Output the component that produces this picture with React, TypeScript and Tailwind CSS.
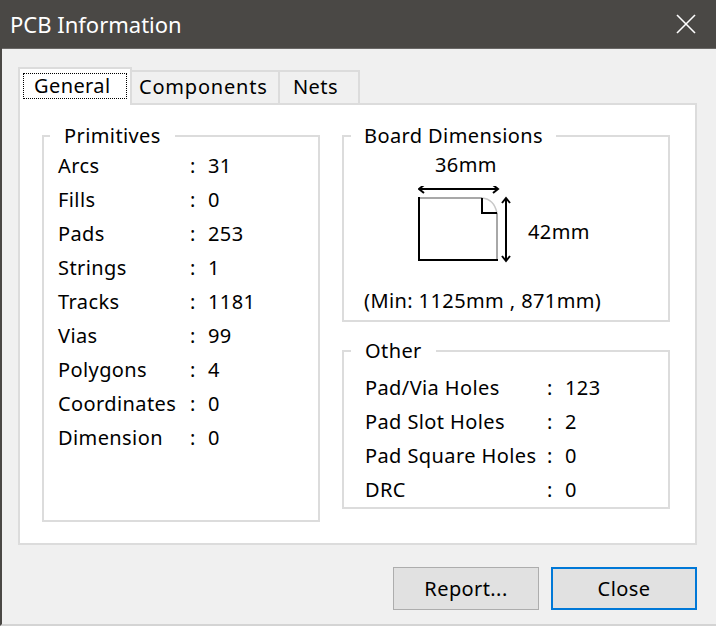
import React from 'react';

const primitives = [
  ['Arcs', '31'],
  ['Fills', '0'],
  ['Pads', '253'],
  ['Strings', '1'],
  ['Tracks', '1181'],
  ['Vias', '99'],
  ['Polygons', '4'],
  ['Coordinates', '0'],
  ['Dimension', '0'],
];

const other = [
  ['Pad/Via Holes', '123'],
  ['Pad Slot Holes', '2'],
  ['Pad Square Holes', '0'],
  ['DRC', '0'],
];

const font = { fontFamily: '"Noto Sans", "Open Sans", sans-serif' };

const App = () => {
  return (
    <div
      className="w-[716px] h-[626px] bg-[#f0f0f0] border-l-2 border-b-2 border-l-[#4a4845] border-b-[#d4d4d4] flex flex-col text-black text-[20px] tracking-[0.02em] overflow-hidden"
      style={font}
    >
      {/* Title bar */}
      <div className="h-[49px] shrink-0 bg-[#4a4845] flex items-center justify-between pl-[8px] pr-[20px] border-b border-[#6a6866]">
        <span className="text-white text-[22px] leading-none tracking-normal">PCB Information</span>
        <svg width="20" height="20" viewBox="0 0 20 20">
          <line x1="1" y1="1" x2="19" y2="19" stroke="#fff" strokeWidth="1.6" />
          <line x1="19" y1="1" x2="1" y2="19" stroke="#fff" strokeWidth="1.6" />
        </svg>
      </div>

      <div className="flex-1 flex flex-col pl-[16px] pr-[19px] pt-[17px]">
        {/* Tabs */}
        <div className="flex items-end h-[37px]">
          <div className="relative z-10 h-[38px] mb-[-2px] bg-white border-2 border-b-0 border-[#dcdcdc] px-[3px] pt-[4px] w-[114px]">
            <div className="border border-dotted border-black h-[26px] flex items-center px-[10px] leading-none">
              General
            </div>
          </div>
          <div className="h-[33px] border-2 border-b-0 border-l-0 border-[#dcdcdc] bg-[#f0f0f0] w-[148px] flex items-center pl-[7px] leading-none pb-[2px] tracking-[0.04em]">
            Components
          </div>
          <div className="h-[33px] border-2 border-b-0 border-l-0 border-[#dcdcdc] bg-[#f0f0f0] w-[80px] flex items-center pl-[13px] leading-none pb-[2px]">
            Nets
          </div>
        </div>

        {/* Tab panel */}
        <div className="h-[442px] bg-white border-2 border-[#dcdcdc] flex gap-[22px] pl-[22px] pr-[24px] pt-[18px]">
          <fieldset className="w-[278px] h-[399px] border-2 border-[#dcdcdc] pl-[14px] pr-0 pb-0 pt-0 m-0">
            <legend className="ml-[-8px] px-[14px] leading-[26px]">Primitives</legend>
            <div className="grid grid-cols-[132px_18px_auto]">
              {primitives.map(([k, v]) => (
                <React.Fragment key={k}>
                  <div className="h-[34px] flex items-center whitespace-nowrap">{k}</div>
                  <div className="h-[34px] flex items-center">:</div>
                  <div className="h-[34px] flex items-center">{v}</div>
                </React.Fragment>
              ))}
            </div>
          </fieldset>

          <div className="flex flex-col gap-[16px] w-[328px]">
            <fieldset className="h-[199px] border-2 border-[#dcdcdc] pl-[20px] p-0 m-0">
              <legend className="ml-[-13px] px-[13px] leading-[26px]">Board Dimensions</legend>
              <div className="relative h-[170px]">
                <span className="absolute left-[71px] top-[6px] leading-none">36mm</span>
                <svg className="absolute left-[54px] top-[37px]" width="100" height="80" viewBox="0 0 100 80">
                  {/* width arrow */}
                  <line x1="1" y1="3" x2="80" y2="3" stroke="#000" strokeWidth="2" />
                  <polyline points="6,-1 1,3 6,7" fill="none" stroke="#000" strokeWidth="2" />
                  <polyline points="75,-1 80,3 75,7" fill="none" stroke="#000" strokeWidth="2" />
                  {/* board */}
                  <line x1="1" y1="12" x2="64" y2="12" stroke="#a8a8a8" strokeWidth="2" />
                  <path d="M64 12 Q76 13 79 27" fill="none" stroke="#c8c8c8" strokeWidth="1.5" />
                  <line x1="79" y1="27" x2="79" y2="75" stroke="#a8a8a8" strokeWidth="2" />
                  <polyline points="64,12 64,27 79,27" fill="none" stroke="#000" strokeWidth="2" />
                  <polyline points="1,11 1,74 80,74" fill="none" stroke="#000" strokeWidth="2" />
                  {/* height arrow */}
                  <line x1="88" y1="12" x2="88" y2="75" stroke="#000" strokeWidth="2" />
                  <polyline points="84,17 88,12 92,17" fill="none" stroke="#000" strokeWidth="2" />
                  <polyline points="84,70 88,75 92,70" fill="none" stroke="#000" strokeWidth="2" />
                </svg>
                <span className="absolute left-[164px] top-[73px] leading-none">42mm</span>
                <span className="absolute left-[0px] top-[142px] leading-none whitespace-nowrap">(Min: 1125mm , 871mm)</span>
              </div>
            </fieldset>

            <fieldset className="h-[171px] border-2 border-[#dcdcdc] pl-[21px] p-0 m-0">
              <legend className="ml-[-14px] px-[14px] leading-[26px]">Other</legend>
              <div className="grid grid-cols-[182px_18px_auto] pt-[7px]">
                {other.map(([k, v]) => (
                  <React.Fragment key={k}>
                    <div className="h-[34px] flex items-center whitespace-nowrap">{k}</div>
                    <div className="h-[34px] flex items-center">:</div>
                    <div className="h-[34px] flex items-center">{v}</div>
                  </React.Fragment>
                ))}
              </div>
            </fieldset>
          </div>
        </div>

        {/* Buttons */}
        <div className="flex justify-end gap-[12px] pt-[22px]">
          <button className="w-[146px] h-[43px] bg-[#e1e1e1] border border-[#adadad] leading-none">
            Report...
          </button>
          <button className="w-[146px] h-[43px] bg-[#e1e1e1] border-2 border-[#0078d7] leading-none">
            Close
          </button>
        </div>
      </div>
    </div>
  );
};

export default App;
